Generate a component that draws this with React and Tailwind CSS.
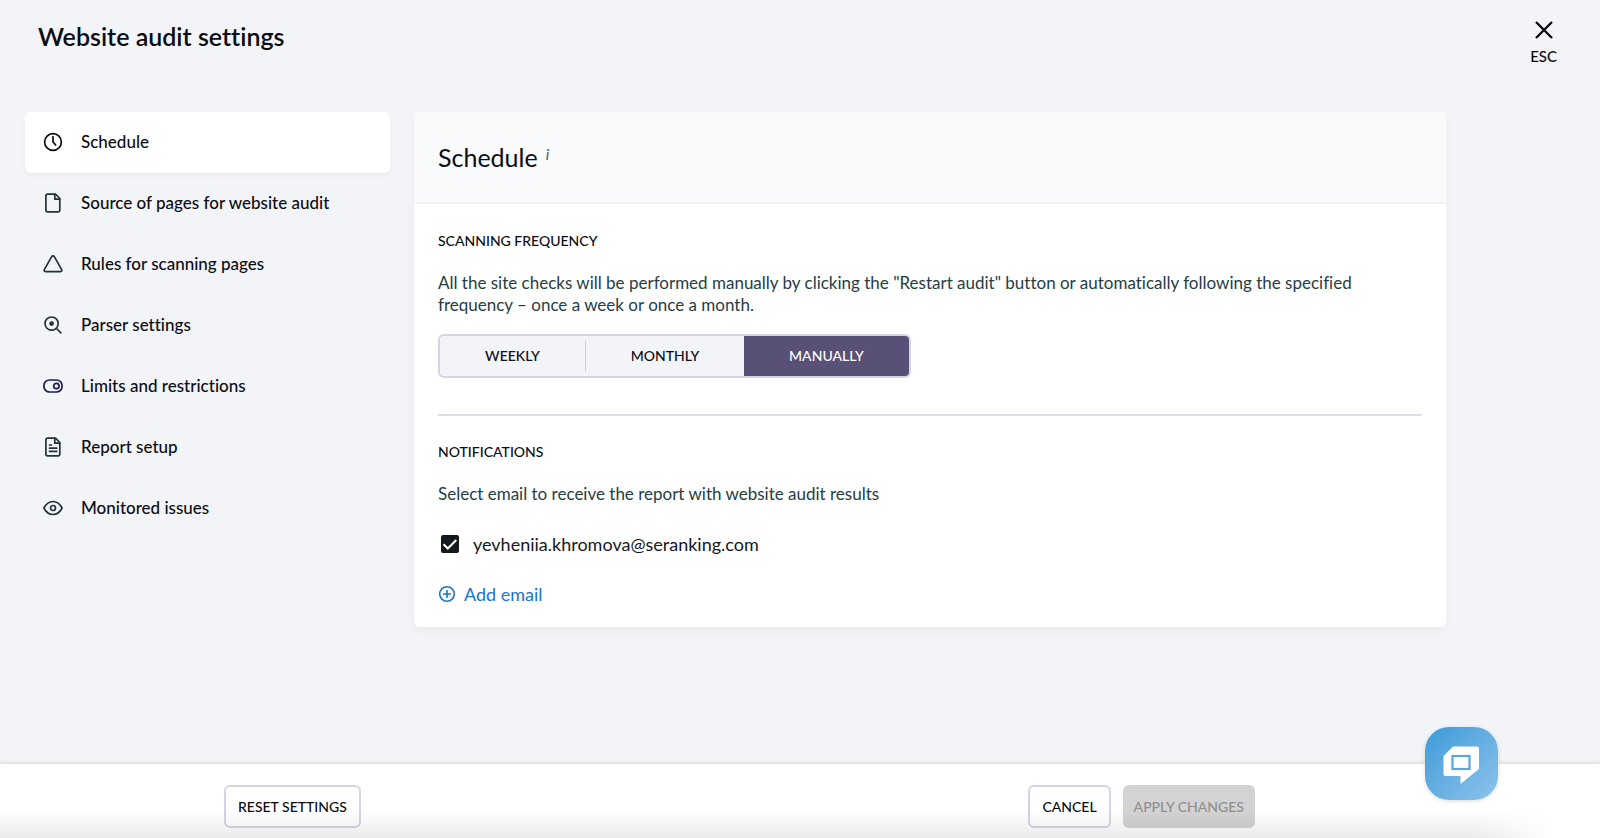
import { useState } from "react";

function Icon({ children, className = "text-[#22323a]" }) {
  return (
    <svg
      viewBox="0 0 20 20"
      className={`size-5 shrink-0 ${className}`}
      fill="none"
      stroke="currentColor"
      strokeWidth="1.7"
      strokeLinecap="round"
      strokeLinejoin="round"
      aria-hidden="true"
    >
      {children}
    </svg>
  );
}

const pagePath = "M4.5 1.2h8l4.300 4.300v11.700a1.600 1.600 0 0 1-1.600 1.600H4.500a1.600 1.600 0 0 1-1.600-1.600V2.800A1.600 1.600 0 0 1 4.500 1.200Z";

const sections = [
  {
    label: "Schedule",
    icon: (
      <Icon className="text-[#0b0d12]">
        <circle cx="10" cy="10" r="8.4" />
        <path d="M10 4.6V10l2.6 2.8" />
      </Icon>
    ),
  },
  {
    label: "Source of pages for website audit",
    icon: (
      <Icon>
        <path d={pagePath} />
        <path d="M11.800 1.400v4.800h4.800" />
      </Icon>
    ),
  },
  {
    label: "Rules for scanning pages",
    icon: (
      <Icon>
        <path d="M8.700 2.600 1.300 15.600a1.300 1.300 0 0 0 1.100 2h15.200a1.300 1.300 0 0 0 1.100-2L11.300 2.600a1.500 1.500 0 0 0-2.600 0Z" />
      </Icon>
    ),
  },
  {
    label: "Parser settings",
    icon: (
      <Icon>
        <circle cx="8.600" cy="8.600" r="6.600" />
        <circle cx="8.600" cy="8.600" r="1.500" fill="currentColor" />
        <path d="m13.500 13.500 4.300 4.300" />
      </Icon>
    ),
  },
  {
    label: "Limits and restrictions",
    icon: (
      <Icon className="text-[#1d1b52]">
        <rect x="0.900" y="4" width="18.200" height="12" rx="5.600" />
        <circle cx="13.400" cy="10" r="2.700" />
      </Icon>
    ),
  },
  {
    label: "Report setup",
    icon: (
      <Icon>
        <path d={pagePath} />
        <path d="M11.800 1.400v4.800h4.800M6.500 8h2M6.500 11.200h7.200M6.500 14.400h7.200" />
      </Icon>
    ),
  },
  {
    label: "Monitored issues",
    icon: (
      <Icon>
        <path d="M0.900 10C3 6 6.200 3.500 10 3.500S17 6 19.100 10C17 14 13.800 16.500 10 16.500S3 14 0.900 10Z" />
        <circle cx="10" cy="10" r="2.500" />
      </Icon>
    ),
  },
];

function Sidebar() {
  return (
    <nav className="flex w-[365px] shrink-0 flex-col" aria-label="Settings sections">
      {sections.map(({ label, icon }, i) => (
        <a
          key={label}
          href="#"
          aria-current={i === 0 ? "page" : undefined}
          className={`flex items-center gap-[18px] rounded-md pt-[17px] pr-[18px] pb-[19px] pl-[18px] text-[17px] leading-[25px] font-medium text-[#0b0d12] ${
            i === 0 ? "bg-white shadow-[0_2px_5px_rgba(0,0,0,0.05)]" : ""
          }`}
        >
          {icon}
          {label}
        </a>
      ))}
    </nav>
  );
}

function Frequency() {
  const [value, setValue] = useState("MANUALLY");
  const options = [
    { name: "WEEKLY", width: "w-[146px]" },
    { name: "MONTHLY", width: "w-[158px]" },
    { name: "MANUALLY", width: "w-[165px]" },
  ];
  return (
    <div className="mt-[18px] flex h-11 w-fit overflow-hidden rounded-md border-2 border-[#d5d4e4] bg-[#f3f4f8]">
      {options.map(({ name, width }, i) => (
        <button
          key={name}
          type="button"
          aria-pressed={value === name}
          onClick={() => setValue(name)}
          className={`flex items-center text-sm font-medium ${width} ${
            value === name ? "bg-[#595077] text-white" : "text-[#0b0d12]"
          }`}
        >
          <span className="flex-1">{name}</span>
          {i === 0 && <span className="h-[30px] w-px bg-[#cfd0dc]" />}
        </button>
      ))}
    </div>
  );
}

function SchedulePanel() {
  const [checked, setChecked] = useState(true);
  return (
    <main className="min-w-0 flex-1 overflow-hidden rounded-md bg-white shadow-[0_4px_10px_rgba(0,0,0,0.04)]">
      <header className="flex h-[92px] items-center gap-2 border-b-2 border-[#f0f1f4] bg-[#f9fafc] px-6">
        <h2 className="text-[25px] leading-8 text-[#0b0d12]">Schedule</h2>
        <button type="button" aria-label="About schedule" className="self-start pt-8 text-[15px] leading-5 font-medium text-[#4d6577] italic">
          i
        </button>
      </header>
      <div className="px-6 pt-[27px] pb-[21px]">
        <h3 className="text-sm font-medium text-[#0b0d12]">SCANNING FREQUENCY</h3>
        <p className="mt-[21px] text-[17px] leading-[22px] text-[#263d45]">
          All the site checks will be performed manually by clicking the "Restart audit" button or automatically following the
          specified frequency – once a week or once a month.
        </p>
        <Frequency />
        <hr className="mt-9 border-t-2 border-[#dcdde6]" />
        <h3 className="mt-[26px] text-sm font-medium text-[#0b0d12]">NOTIFICATIONS</h3>
        <p className="mt-[21px] text-[17px] leading-[22px] text-[#263d45]">
          Select email to receive the report with website audit results
        </p>
        <label className="mt-[27px] flex w-fit items-center gap-3.5 pl-[3px] text-lg leading-[24px] text-[#15181c]">
          <span className="grid">
            <input
              type="checkbox"
              checked={checked}
              onChange={(e) => setChecked(e.target.checked)}
              className="peer col-start-1 row-start-1 size-[18px] appearance-none rounded-xs border-2 border-[#15181f] checked:bg-[#15181f]"
            />
            <svg
              viewBox="0 0 18 18"
              className="pointer-events-none invisible col-start-1 row-start-1 size-[18px] peer-checked:visible"
              fill="none"
              stroke="white"
              strokeWidth="2"
              aria-hidden="true"
            >
              <path d="m2.500 9.200 4.300 4.300L15.300 5" />
            </svg>
          </span>
          yevheniia.khromova@seranking.com
        </label>
        <button type="button" className="mt-[26px] flex items-center gap-2 text-lg leading-6 text-[#1a75c8]">
          <svg viewBox="0 0 18 18" className="size-[18px]" fill="none" stroke="currentColor" strokeWidth="1.600" aria-hidden="true">
            <circle cx="9" cy="9" r="7.300" />
            <path d="M9 5v8M5 9h8" />
          </svg>
          Add email
        </button>
      </div>
    </main>
  );
}

function Footer() {
  return (
    <footer className="relative flex justify-between bg-white pt-[21px] pr-[345px] pb-2.5 pl-[224px] text-sm font-medium text-[#0b0d12] shadow-[0_-1px_4px_rgba(0,0,0,0.12)]">
      <button type="button" className="h-[43px] rounded-md border-2 border-[#d5d4e4] bg-white px-3">
        RESET SETTINGS
      </button>
      <div className="flex gap-3">
        <button type="button" className="h-[43px] rounded-md border-2 border-[#d5d4e4] bg-white px-3">
          CANCEL
        </button>
        <button type="button" disabled className="h-[43px] rounded-md bg-[#d3d3d3] px-[11px] text-[#8f8f8f]">
          APPLY CHANGES
        </button>
      </div>
      <div className="pointer-events-none absolute inset-x-0 bottom-0 h-7 bg-linear-to-t from-black/8 to-transparent mask-r-from-92% mask-r-to-97%" />
    </footer>
  );
}

export default function App() {
  return (
    <div className="flex min-h-screen flex-col bg-[#f3f4f8] font-[Lato,sans-serif] [font-variant-ligatures:none]">
      <header className="flex h-28 items-start justify-between pr-[43px] pl-[38px]">
        <h1 className="pt-5 text-[25px] leading-8 font-semibold text-[#0b0d12]">Website audit settings</h1>
        <button type="button" className="flex flex-col items-center gap-1 pt-5 text-[15px] leading-6 font-medium text-[#0b0d12]">
          <svg viewBox="0 0 20 20" className="size-5" stroke="currentColor" strokeWidth="2.400" aria-hidden="true">
            <path d="m2 2 16 16M18 2 2 18" />
          </svg>
          ESC
        </button>
      </header>
      <div className="flex flex-1 items-start gap-6 pr-[154px] pb-6 pl-[25px]">
        <Sidebar />
        <SchedulePanel />
      </div>
      <Footer />
      <button
        type="button"
        aria-label="Open chat"
        className="fixed right-[102px] bottom-[38px] grid size-[73px] place-items-center rounded-3xl bg-linear-to-br from-[#3b9ad9] to-[#8cc3ea] shadow-[0_1px_4px_rgba(0,0,0,0.15)]"
      >
        <svg viewBox="0 0 73 73" className="size-full" aria-hidden="true">
          <path d="M28 19.500h24a2 2 0 0 1 2 2V42L35.500 57v-8H20.500a2 2 0 0 1-2-2V29Z" fill="white" />
          <rect x="27.500" y="29" width="17" height="13" fill="white" stroke="#5ba6dc" strokeWidth="2.200" />
        </svg>
      </button>
    </div>
  );
}
